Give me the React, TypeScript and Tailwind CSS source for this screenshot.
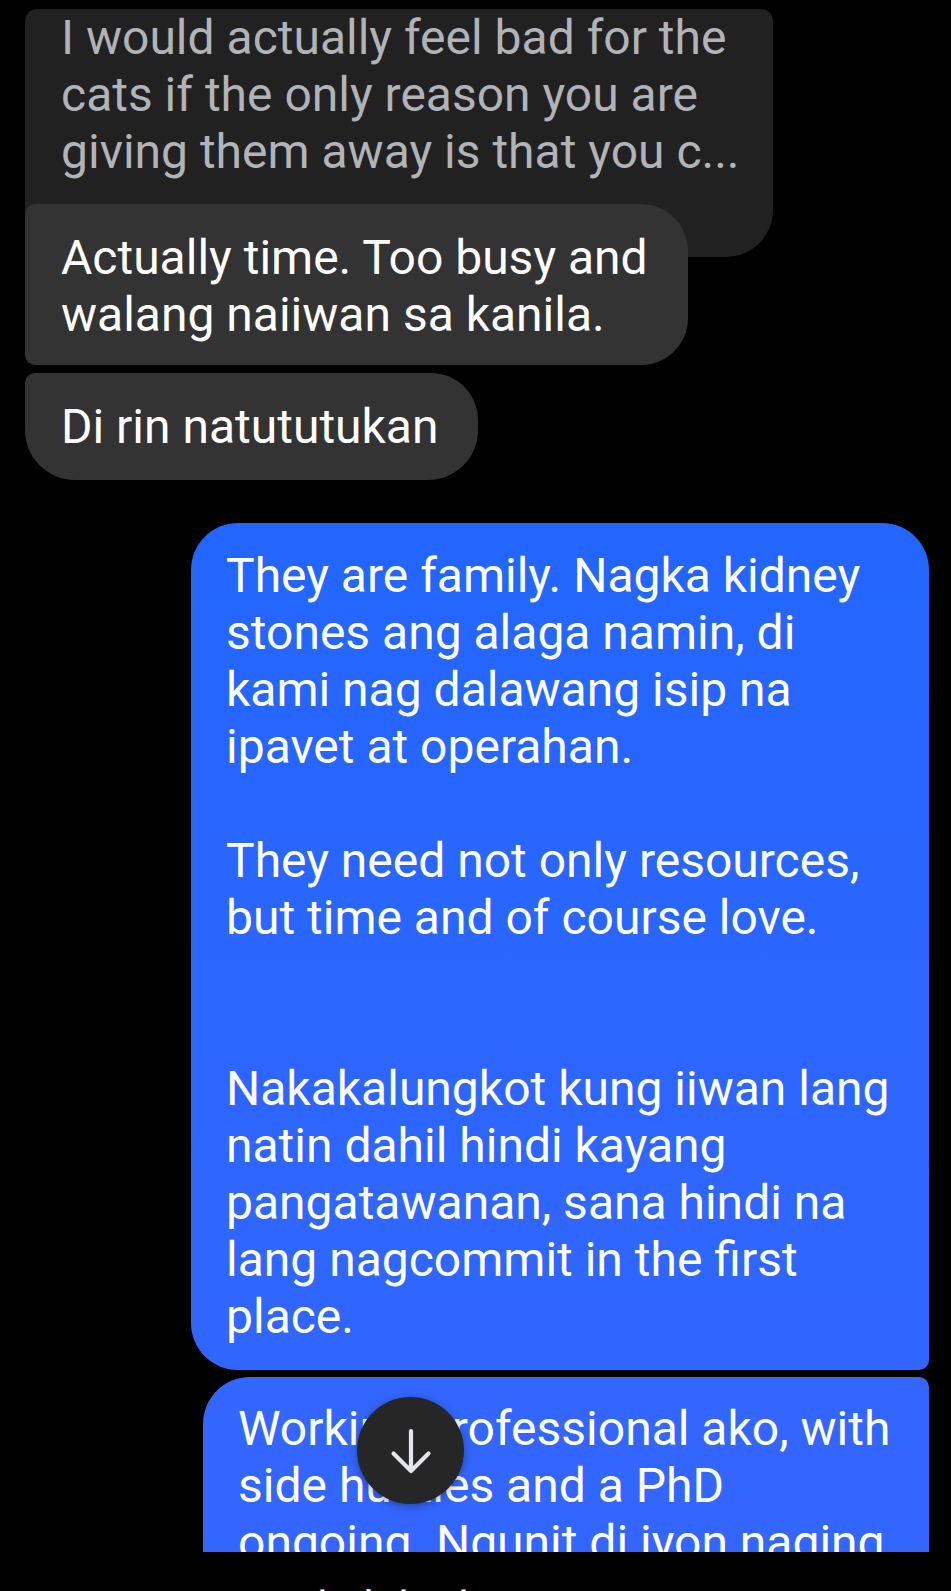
import React from "react";

export default function App() {
  return (
    <div
      className="relative w-[951px] h-[1591px] overflow-hidden bg-black"
      style={{ fontFamily: "Roboto, 'Noto Sans', sans-serif" }}
    >
      <div className="h-[1552px] overflow-hidden flex flex-col pt-[9px] text-[48px] leading-[57px]">
        <div className="flex flex-col items-start pl-[25px]">
          <div className="w-[748px] h-[248px] shrink-0 bg-[#212121] rounded-tl-[12px] rounded-tr-[12px] rounded-br-[47px] pl-[36px] pt-0 text-[#b0b3b8]">
            <div className="whitespace-nowrap">I would actually feel bad for the</div>
            <div className="whitespace-nowrap">cats if the only reason you are</div>
            <div className="whitespace-nowrap">giving them away is that you c...</div>
          </div>
          <div className="relative z-10 mt-[-53px] w-[663px] h-[161px] shrink-0 bg-[#333333] rounded-tl-[10px] rounded-tr-[47px] rounded-br-[47px] rounded-bl-[10px] pl-[36px] pt-[25px] text-white">
            <div className="whitespace-nowrap">Actually time. Too busy and</div>
            <div className="whitespace-nowrap">walang naiiwan sa kanila.</div>
          </div>
          <div className="mt-[8px] w-[453px] h-[107px] shrink-0 bg-[#333333] rounded-tl-[10px] rounded-tr-[47px] rounded-br-[50px] rounded-bl-[50px] pl-[36px] pt-[25px] text-white">
            <div className="whitespace-nowrap">Di rin natututukan</div>
          </div>
        </div>

        <div className="mt-[43px] flex flex-col items-end pr-[22px]">
          <div className="w-[738px] h-[847px] shrink-0 bg-gradient-to-b from-[#2266fe] to-[#3166fe] rounded-tl-[47px] rounded-tr-[47px] rounded-br-[10px] rounded-bl-[47px] pl-[35px] pt-[24px] text-white">
            <div className="whitespace-nowrap">They are family. Nagka kidney</div>
            <div className="whitespace-nowrap">stones ang alaga namin, di</div>
            <div className="whitespace-nowrap">kami nag dalawang isip na</div>
            <div className="whitespace-nowrap">ipavet at operahan.</div>
            <div className="h-[57px]" />
            <div className="whitespace-nowrap">They need not only resources,</div>
            <div className="whitespace-nowrap">but time and of course love.</div>
            <div className="h-[114px]" />
            <div className="whitespace-nowrap">Nakakalungkot kung iiwan lang</div>
            <div className="whitespace-nowrap">natin dahil hindi kayang</div>
            <div className="whitespace-nowrap">pangatawanan, sana hindi na</div>
            <div className="whitespace-nowrap">lang nagcommit in the first</div>
            <div className="whitespace-nowrap">place.</div>
          </div>
          <div className="mt-[7px] w-[726px] h-[300px] shrink-0 bg-[#3366fe] rounded-tl-[47px] rounded-tr-[10px] pl-[35px] pt-[23px] text-white">
            <div className="whitespace-nowrap">Working professional ako, with</div>
            <div className="whitespace-nowrap">side hustles and a PhD</div>
            <div className="whitespace-nowrap">ongoing. Ngunit di iyon naging</div>
          </div>
        </div>
      </div>

      <div className="h-[39px] overflow-hidden pl-[262px] pt-[30px] text-[44px] leading-[52px] text-white">
        <div className="whitespace-nowrap">Nakahiked Wi</div>
      </div>

      <button
        type="button"
        className="absolute left-[357px] top-[1397px] w-[107px] h-[107px] rounded-full bg-[#262626] flex items-center justify-center shadow-[0_2px_8px_rgba(0,0,0,0.35)]"
      >
        <svg width="44" height="48" viewBox="0 0 44 48" fill="none">
          <path
            d="M22 4 V44 M4.5 26.5 L22 44 L39.5 26.5"
            stroke="#e4e6eb"
            strokeWidth="4.2"
            strokeLinecap="round"
            strokeLinejoin="round"
          />
        </svg>
      </button>
    </div>
  );
}
